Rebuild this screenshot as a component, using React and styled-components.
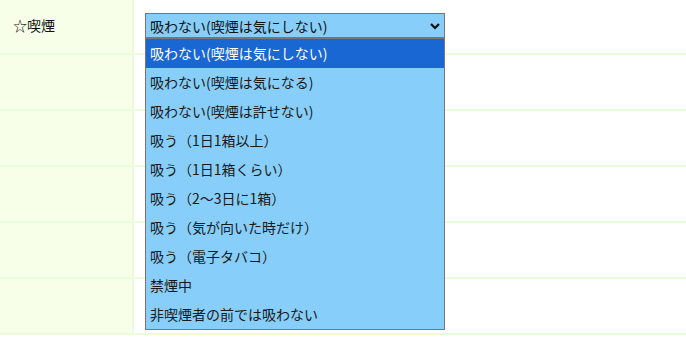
import React from "react"
import styled, { createGlobalStyle } from "styled-components"

const GlobalStyle = createGlobalStyle`
  html, body {
    margin: 0;
    padding: 0;
    background: #ffffff;
  }
  body {
    font-family: "Noto Sans CJK JP", "Noto Sans", sans-serif;
    font-size: 14px;
    color: #222;
  }
`

const Table = styled.div`
  width: 686px;
  height: 340px;
  overflow: hidden;
`

const Row = styled.div`
  display: grid;
  grid-template-columns: 134px 1fr;
  height: ${(p) => p.h}px;
  border-bottom: 2px solid #ecfbdc;
`

const Label = styled.div`
  background: #f8ffe9;
  border-right: 2px solid #ecfbdc;
  padding: 15px 0 0 13px;
  font-size: 14px;
  line-height: 20px;
  color: #111;
`

const Cell = styled.div`
  position: relative;
  padding: 13px 0 0 11px;
`

const SelectBox = styled.div`
  box-sizing: border-box;
  width: 300px;
  height: 25px;
  background: #87cefa;
  border: 1px solid #767676;
  display: flex;
  align-items: center;
  justify-content: space-between;
  padding: 0 4px 0 4px;
  font-size: 14px;
  color: #111;
`

const Chevron = styled.svg`
  width: 10px;
  height: 8px;
`

const ListBox = styled.ul`
  position: absolute;
  left: 11px;
  top: 37px;
  box-sizing: border-box;
  width: 300px;
  margin: 0;
  padding: 0;
  list-style: none;
  background: #87cefa;
  border: 1px solid #767676;
  border-top-width: 2px;
  z-index: 2;
`

const Option = styled.li`
  height: 29px;
  line-height: 29px;
  padding-left: 4px;
  font-size: 14px;
  white-space: nowrap;
  color: ${(p) => (p.active ? "#ffffff" : "#1a1a1a")};
  background: ${(p) => (p.active ? "#1967d2" : "transparent")};
`

const options = [
  "吸わない(喫煙は気にしない)",
  "吸わない(喫煙は気になる)",
  "吸わない(喫煙は許せない)",
  "吸う（1日1箱以上）",
  "吸う（1日1箱くらい）",
  "吸う（2〜3日に1箱）",
  "吸う（気が向いた時だけ）",
  "吸う（電子タバコ）",
  "禁煙中",
  "非喫煙者の前では吸わない",
]

export default function App() {
  return (
    <>
      <GlobalStyle />
      <Table>
        <Row h={53}>
          <Label>☆喫煙</Label>
          <Cell>
            <SelectBox>
              <span>{options[0]}</span>
              <Chevron viewBox="0 0 10 8">
                <path d="M1 2 L5 6 L9 2" fill="none" stroke="#111" strokeWidth="2.2" />
              </Chevron>
            </SelectBox>
            <ListBox>
              {options.map((o, i) => (
                <Option key={i} active={i === 0}>
                  {o}
                </Option>
              ))}
            </ListBox>
          </Cell>
        </Row>
        {[0, 1, 2, 3, 4].map((i) => (
          <Row key={i} h={54}>
            <Label />
            <Cell />
          </Row>
        ))}
      </Table>
    </>
  )
}
